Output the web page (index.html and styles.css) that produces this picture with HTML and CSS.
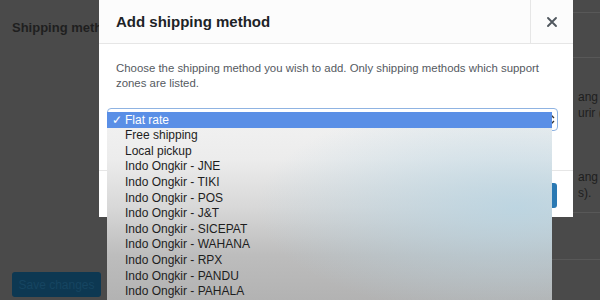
FILE: index.html
```html
<!DOCTYPE html>
<html lang="en">
<head>
<meta charset="utf-8">
<title>Add shipping method</title>
<link rel="stylesheet" href="styles.css">
</head>
<body>
<div class="bg">
  <div class="bg-side">
    <h2 class="bg-label">Shipping methods</h2>
    <button class="bg-save">Save changes</button>
  </div>
  <div class="bg-table">
    <div class="bg-row r1"></div>
    <div class="bg-row r2"></div>
    <div class="bg-row r3">
      <p class="bg-desc">ang r<br>urir (J</p>
      <p class="bg-desc">ang s<br>s).</p>
    </div>
    <div class="bg-row r4"></div>
    <div class="bg-row r5"></div>
  </div>
</div>

<div class="modal">
  <header class="modal-head">
    <h1 class="modal-title">Add shipping method</h1>
    <button class="modal-close" aria-label="Close">
      <svg width="12" height="12" viewBox="0 0 12 12"><path d="M2 2 L10 10 M10 2 L2 10" stroke="#50575e" stroke-width="1.9" stroke-linecap="round"/></svg>
    </button>
  </header>
  <div class="modal-body">
    <p class="modal-text">Choose the shipping method you wish to add. Only shipping methods which support zones are listed.</p>
    <div class="select">
      <svg class="select-arrows" width="7" height="11" viewBox="0 0 7 11"><path d="M1 4 L3.5 1.5 L6 4 M1 7 L3.5 9.5 L6 7" fill="none" stroke="#333" stroke-width="1.4"/></svg>
    </div>
  </div>
  <footer class="modal-foot">
    <button class="modal-btn">Add shipping method</button>
  </footer>

  <ul class="menu">
    <li class="menu-item is-selected"><span class="check">✓</span>Flat rate</li>
    <li class="menu-item">Free shipping</li>
    <li class="menu-item">Local pickup</li>
    <li class="menu-item">Indo Ongkir - JNE</li>
    <li class="menu-item">Indo Ongkir - TIKI</li>
    <li class="menu-item">Indo Ongkir - POS</li>
    <li class="menu-item">Indo Ongkir - J&amp;T</li>
    <li class="menu-item">Indo Ongkir - SICEPAT</li>
    <li class="menu-item">Indo Ongkir - WAHANA</li>
    <li class="menu-item">Indo Ongkir - RPX</li>
    <li class="menu-item">Indo Ongkir - PANDU</li>
    <li class="menu-item">Indo Ongkir - PAHALA</li>
  </ul>
</div>
</body>
</html>
```

FILE: styles.css
```css
* { box-sizing: border-box; }
html, body {
  margin: 0;
  padding: 0;
  width: 600px;
  height: 300px;
  overflow: hidden;
}
body {
  background: #4a4a4a;
  font-family: "Liberation Sans", Arial, sans-serif;
  position: relative;
}
button {
  appearance: none;
  -webkit-appearance: none;
}

/* background page (under overlay) */
.bg {
  display: grid;
  grid-template-columns: 180px 1fr;
  height: 300px;
}
.bg-side {
  display: flex;
  flex-direction: column;
  justify-content: space-between;
  padding: 20px 0 3px 12px;
}
.bg-label {
  margin: 0;
  font-size: 13px;
  font-weight: bold;
  color: #1f1f1f;
  line-height: 16px;
}
.bg-save {
  width: 89px;
  height: 25px;
  border: 0;
  border-radius: 3px;
  background: #0d3852;
  color: #164561;
  font-family: inherit;
  font-size: 12px;
  padding: 0;
  align-self: flex-start;
}
.bg-table {
  display: flex;
  flex-direction: column;
}
.bg-row { border-bottom: 1px solid #585858; }
.r1 { height: 13px; }
.r2 { height: 45px; }
.r3 { height: 155px; display: flex; flex-direction: column; padding: 31px 0 0 398px; gap: 48px; }
.r4 { height: 47px; }
.r5 { flex: 1; border-bottom: 0; }
.bg-desc {
  margin: 0;
  font-size: 12px;
  line-height: 16px;
  color: #1e1e1e;
  white-space: nowrap;
}

/* modal */
.modal {
  position: absolute;
  left: 99px;
  top: 0;
  width: 474px;
  height: 217px;
  background: #fff;
  display: flex;
  flex-direction: column;
}
.modal-head {
  height: 44px;
  display: flex;
  align-items: stretch;
  background: #fcfcfc;
  border-bottom: 1px solid #e6e6e6;
}
.modal-title {
  flex: 1;
  margin: 0;
  padding-left: 17px;
  font-size: 15px;
  font-weight: bold;
  color: #1d2327;
  line-height: 44px;
}
.modal-close {
  width: 43px;
  border: 0;
  border-left: 1px solid #e6e6e6;
  background: transparent;
  display: flex;
  align-items: center;
  justify-content: center;
  padding: 0;
}
.modal-body {
  flex: 1;
  padding: 17px 16px 0 8px;
}
.modal-text {
  margin: 0 0 17px 9px;
  font-size: 11.4px;
  line-height: 15px;
  color: #555a5f;
}
.select {
  height: 23px;
  border: 1px solid #8fb3e2;
  border-radius: 4px;
  display: flex;
  align-items: center;
  justify-content: flex-end;
  padding-right: 2px;
  margin-right: -1px;
}
.modal-foot {
  height: 47px;
  border-top: 1px solid #e6e6e6;
  display: flex;
  justify-content: flex-end;
  align-items: flex-start;
  padding: 12px 16px 0 0;
}
.modal-btn {
  height: 25px;
  border: 0;
  border-radius: 3px;
  background: #2a79b3;
  color: #fff;
  font-family: inherit;
  font-size: 12px;
  padding: 0 10px;
}

/* native dropdown menu */
.menu {
  position: absolute;
  left: 8px;
  top: 112px;
  width: 445px;
  height: 190px;
  margin: 0;
  padding: 0;
  list-style: none;
  background:
    radial-gradient(ellipse 260px 110px at 92% 50%, rgba(180, 212, 228, 0.75), rgba(180, 212, 228, 0) 100%),
    linear-gradient(to bottom, #f2f2f2 0%, #ececec 25%, #d8d8d8 50%, #bdbdbd 75%, #b2b2b2 100%);
}
.menu-item {
  height: 15.64px;
  line-height: 15.64px;
  padding-left: 18px;
  font-size: 12px;
  color: #1e1e1e;
  white-space: nowrap;
  position: relative;
}
.menu-item.is-selected {
  height: 16px;
  line-height: 16px;
  background: #5a8fe6;
  color: #fff;
}
.check {
  position: absolute;
  left: 5px;
  top: 0;
  font-size: 12px;
}
.select-arrows { display: block; }
```
